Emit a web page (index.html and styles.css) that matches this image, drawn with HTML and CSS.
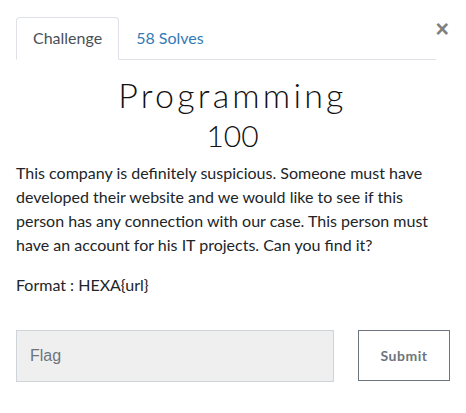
FILE: index.html
```html
<!DOCTYPE html>
<html>
<head>
<meta charset="utf-8">
<link rel="stylesheet" href="styles.css">
</head>
<body>
<div class="modal">
  <div class="header">
    <ul class="tabs">
      <li class="tab active">Challenge</li>
      <li class="tab link">58 Solves</li>
    </ul>
    <button class="close" aria-label="Close">&times;</button>
  </div>
  <h2 class="title">Programming</h2>
  <h3 class="value">100</h3>
  <div class="desc">
    <p>This company is definitely suspicious. Someone must have developed their website and we would like to see if this person has any connection with our case. This person must have an account for his IT projects. Can you find it?</p>
    <p>Format : HEXA{url}</p>
  </div>
  <form class="submit-row">
    <input class="flag" type="text" placeholder="Flag">
    <button class="submit" type="button">Submit</button>
  </form>
</div>
</body>
</html>
```
FILE: styles.css
```css
* { box-sizing: border-box; }
body {
  margin: 0;
  background: #fff;
  font-family: Lato, "Open Sans", sans-serif;
  color: #212529;
}
.modal {
  padding: 17px 17px 0 16px;
}
.header {
  display: flex;
  align-items: flex-start;
}
.tabs {
  list-style: none;
  margin: 0;
  padding: 0;
  display: flex;
  width: 420px;
  border-bottom: 1px solid #dee2e6;
}
.tab {
  font-size: 16px;
  line-height: 24px;
  padding: 8px 16px 9px;
  margin-bottom: -1px;
  border: 1px solid transparent;
  border-radius: 4px 4px 0 0;
}
.tab.active {
  color: #495057;
  border-color: #dee2e6 #dee2e6 #fff;
  background: #fff;
}
.tab.link { color: #337ab7; }
.close {
  margin-left: auto;
  margin-top: 1px;
  background: none;
  border: 0;
  padding: 0;
  font-family: "Liberation Sans", Arial, sans-serif;
  font-size: 23px;
  font-weight: bold;
  line-height: 22px;
  color: #808080;
}
.title {
  margin: 15px 0 0;
  text-align: center;
  font-family: Lato, sans-serif;
  font-weight: 300;
  font-size: 34px;
  line-height: 40px;
  letter-spacing: 3.2px;
  color: #111;
}
.value {
  margin: 2px 0 0;
  text-align: center;
  font-family: Lato, sans-serif;
  font-weight: 300;
  font-size: 30px;
  line-height: 36px;
  color: #111;
}
.desc {
  margin-top: 8px;
  font-size: 16px;
  line-height: 24px;
  color: #212529;
}
.desc p { margin: 0 0 16px; }
.submit-row {
  margin-top: 33px;
  display: flex;
  align-items: flex-start;
}
.flag {
  flex: none;
  width: 318px;
  height: 52px;
  border: 1px solid #ced4da;
  background: #efefef;
  padding: 0 13px;
  font-family: "Liberation Sans", Arial, sans-serif;
  font-size: 16px;
  color: #495057;
}
.flag::placeholder { color: #6c757d; }
.submit {
  flex: none;
  margin-left: 24px;
  width: 92px;
  height: 51px;
  border: 1px solid #6c757d;
  background: #fff;
  color: #6c757d;
  font-family: Lato, sans-serif;
  font-weight: bold;
  font-size: 14px;
  letter-spacing: 0.5px;
}
```
